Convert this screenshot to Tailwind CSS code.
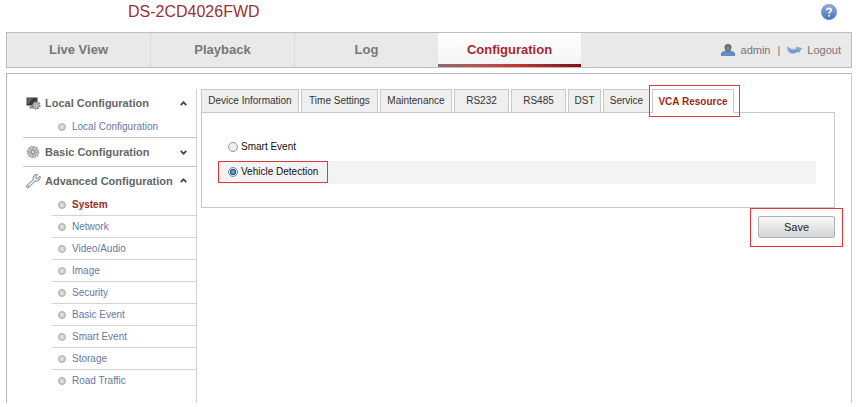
<!DOCTYPE html>
<html lang="en">
<head>
    <meta charset="UTF-8">
    <meta name="viewport" content="width=device-width, initial-scale=1.0">
    <title>DS-2CD4026FWD - Configuration</title>
    <script src="https://cdn.jsdelivr.net/npm/@tailwindcss/browser@4"></script>
</head>
<body class="bg-white font-['Liberation_Sans',Arial,sans-serif] text-[10px] leading-4 text-[#333]">
    <!-- Shared bullet used by the sidebar links -->
    <svg class="hidden">
        <symbol id="bullet" viewBox="0 0 8 8">
            <circle cx="4" cy="4" r="3.5" fill="#c9c9c9" stroke="#b0b0b0" stroke-width="1"/>
            <circle cx="4" cy="4" r="2" fill="#dedede"/>
        </symbol>
    </svg>

    <header class="flex h-8 items-start justify-between pl-32 pr-5">
        <h1 class="text-base leading-6 text-[#983232]">DS-2CD4026FWD</h1>
        <a href="#" aria-label="Help" class="mt-1">
            <svg class="size-4" viewBox="0 0 16 16">
                <defs>
                    <linearGradient id="help" x1="0" y1="0" x2="0" y2="1">
                        <stop offset="0" stop-color="#8fb1e4"/>
                        <stop offset="1" stop-color="#4471bb"/>
                    </linearGradient>
                </defs>
                <circle cx="8" cy="8" r="7.7" fill="url(#help)" stroke="#6d92cc" stroke-width=".6"/>
                <path d="M5.8 6.1C5.9 3.7 10.3 3.7 10.2 6.2C10.1 7.6 8.1 7.7 8.1 9.6" fill="none" stroke="#fff" stroke-width="1.7"/>
                <circle cx="8.1" cy="11.7" r="1" fill="#fff"/>
            </svg>
        </a>
    </header>

    <nav class="ml-[6px] mr-[5px] flex h-9 justify-between border border-[#bdbdbd] bg-[#e9e9e9]">
        <div class="flex w-[574px] text-[13px] font-bold text-[#777]">
            <a href="#" class="flex flex-1 items-center justify-center border-r border-[#dadada]">Live View</a>
            <a href="#" class="flex flex-1 items-center justify-center border-r border-[#dadada]">Playback</a>
            <a href="#" class="flex flex-1 items-center justify-center">Log</a>
            <a href="#" class="relative flex flex-1 items-center justify-center bg-linear-to-b from-white to-[#f3f3f3] text-[#a32a2e]">
                Configuration
                <span class="absolute inset-x-0 bottom-0 h-[3px] bg-linear-to-r from-[#8c6a68] via-[#c9393b] to-[#7e1215]"></span>
            </a>
        </div>
        <div class="flex items-center pr-[10px] text-[11px] text-[#777]">
            <svg class="mr-[6px] h-3 w-[14px]" viewBox="0 0 14 12">
                <path d="M0 11.5V9.5Q1 7.7 5 7H9Q13 7.7 14 9.5V11.5Z" fill="#5d8bd0" stroke="#476fae" stroke-width=".6"/>
                <path d="M3.5 3.5Q3.5 0 7 0T10.5 3.5Q10.3 7 7 8.3Q3.7 7 3.5 3.5Z" fill="#696969"/>
                <ellipse cx="7" cy="4.6" rx="2" ry="2.4" fill="#8b8580"/>
            </svg>
            <span>admin</span>
            <span class="mx-[7px]">|</span>
            <svg class="mr-[5px] h-2 w-[15px]" viewBox="0 0 15 8">
                <path d="M0 .8L3.2 2.8Q5.5 4 9.5 3V1L14.7 2.4L11.7 6.8L10.8 5.6Q8 7.8 4.5 7.3Q1 6.5 0 .8Z" fill="#86a5d4" stroke="#7592c2" stroke-width=".5"/>
                <path d="M3 5.4Q7 6.8 11 4.3" fill="none" stroke="#5f82bb" stroke-width=".9"/>
            </svg>
            <a href="#">Logout</a>
        </div>
    </nav>

    <div class="ml-[6px] mr-[5px] mt-[5px] flex border border-b-0 border-[#b5b5b5] border-r-[#ccc] pl-4 pt-[15px]">
        <aside class="w-[174px] shrink-0 border-r border-[#d0d0d0] pb-3">
            <button class="flex h-7 w-full items-center whitespace-nowrap pl-[3px] pr-[9px] text-left text-[11px] font-bold text-[#666]">
                <svg class="mr-1 h-4 w-[15px] shrink-0" viewBox="0 0 15 16">
                    <rect x=".5" y="2.5" width="11" height="8" rx=".6" fill="#353535" stroke="#a0a0a0"/>
                    <path d="M1.3 3.3H7L2.5 9H1.3Z" fill="#626262"/>
                    <path d="M4 11H8V13.4H3Z" fill="#909090"/>
                    <circle cx="10.3" cy="10.2" r="3.4" fill="#bbb" stroke="#777" stroke-width="1.8" stroke-dasharray="1.7 .9"/>
                    <circle cx="10.3" cy="10.2" r="2.8" fill="#b8b8b8"/>
                    <circle cx="10.3" cy="10.2" r="1.2" fill="#eee" stroke="#777" stroke-width=".6"/>
                </svg>
                Local Configuration
                <svg class="ml-auto h-[5px] w-[7px] shrink-0" viewBox="0 0 7 5"><path d="M.7 4.2L3.5 1.3L6.3 4.2" fill="none" stroke="#444" stroke-width="1.7"/></svg>
            </button>
            <a href="#" class="flex h-[21px] items-center gap-[6px] border-b border-[#c4c4c4] pl-[35px] text-[#6678a8]">
                <svg class="size-2"><use href="#bullet"/></svg>Local Configuration
            </a>

            <button class="flex h-[29px] w-full items-center whitespace-nowrap border-b border-[#c4c4c4] pl-[3px] pr-[9px] text-left text-[11px] font-bold text-[#666]">
                <svg class="mr-1 h-4 w-[15px] shrink-0" viewBox="0 0 15 16">
                    <circle cx="7" cy="8" r="5.4" fill="#bbb" stroke="#999" stroke-width="1.8" stroke-dasharray="1.8 1"/>
                    <circle cx="7" cy="8" r="5.2" fill="#c4c4c4"/>
                    <path d="M7 3V13M2 8H12M3.5 4.5L10.5 11.5M10.5 4.5L3.5 11.5" stroke="#8e8e8e" stroke-width=".8"/>
                    <circle cx="7" cy="8" r="1.7" fill="#ddd" stroke="#888" stroke-width=".7"/>
                </svg>
                Basic Configuration
                <svg class="ml-auto h-[5px] w-[7px] shrink-0" viewBox="0 0 7 5"><path d="M.7 .8L3.5 3.7L6.3 .8" fill="none" stroke="#444" stroke-width="1.7"/></svg>
            </button>

            <button class="flex h-[27px] w-full items-center whitespace-nowrap pl-[3px] pr-[9px] text-left text-[11px] font-bold text-[#666]">
                <svg class="mr-1 h-4 w-[15px] shrink-0" viewBox="0 0 15 16">
                    <path d="M.8 12.4L7.1 6.7Q6.4 3.6 8.7 2Q10 1.2 11.5 1.6L9.7 3.7L10.5 5.3L12.4 5.1L14 3.1Q14.7 5.2 13.1 7Q11.5 8.6 9 8.2L3.1 14.3Q1.7 15.3.7 14.3Q-.1 13.4.8 12.4Z" fill="#e2e7ee" stroke="#7b8797" stroke-width="1"/>
                    <circle cx="2.2" cy="13" r=".7" fill="#7b8797"/>
                </svg>
                Advanced Configuration
                <svg class="ml-auto h-[5px] w-[7px] shrink-0" viewBox="0 0 7 5"><path d="M.7 4.2L3.5 1.3L6.3 4.2" fill="none" stroke="#444" stroke-width="1.7"/></svg>
            </button>
            <ul class="ml-[29px] divide-y divide-[#d4d4d4] text-[#6678a8]">
                <li><a href="#" class="flex h-[21px] items-center gap-[6px] pl-[6px] font-bold text-[#9c2a1c]"><svg class="size-2"><use href="#bullet"/></svg>System</a></li>
                <li><a href="#" class="flex h-[21px] items-center gap-[6px] pl-[6px]"><svg class="size-2"><use href="#bullet"/></svg>Network</a></li>
                <li><a href="#" class="flex h-[21px] items-center gap-[6px] pl-[6px]"><svg class="size-2"><use href="#bullet"/></svg>Video/Audio</a></li>
                <li><a href="#" class="flex h-[21px] items-center gap-[6px] pl-[6px]"><svg class="size-2"><use href="#bullet"/></svg>Image</a></li>
                <li><a href="#" class="flex h-[21px] items-center gap-[6px] pl-[6px]"><svg class="size-2"><use href="#bullet"/></svg>Security</a></li>
                <li><a href="#" class="flex h-[21px] items-center gap-[6px] pl-[6px]"><svg class="size-2"><use href="#bullet"/></svg>Basic Event</a></li>
                <li><a href="#" class="flex h-[21px] items-center gap-[6px] pl-[6px]"><svg class="size-2"><use href="#bullet"/></svg>Smart Event</a></li>
                <li><a href="#" class="flex h-[21px] items-center gap-[6px] pl-[6px]"><svg class="size-2"><use href="#bullet"/></svg>Storage</a></li>
                <li><a href="#" class="flex h-[21px] items-center gap-[6px] pl-[6px]"><svg class="size-2"><use href="#bullet"/></svg>Road Traffic</a></li>
            </ul>
        </aside>

        <main class="ml-1 mr-4 flex-1">
            <div class="flex h-6 gap-[2px] whitespace-nowrap text-[#333]">
                <button class="w-[98px] border border-[#c8c8c8] bg-[#efefef]">Device Information</button>
                <button class="w-[77px] border border-[#c8c8c8] bg-[#efefef]">Time Settings</button>
                <button class="w-[72px] border border-[#c8c8c8] bg-[#efefef]">Maintenance</button>
                <button class="w-[55px] border border-[#c8c8c8] bg-[#efefef]">RS232</button>
                <button class="w-[55px] border border-[#c8c8c8] bg-[#efefef]">RS485</button>
                <button class="w-[33px] border border-[#c8c8c8] bg-[#efefef]">DST</button>
                <button class="w-[47px] border border-[#c8c8c8] bg-[#efefef]">Service</button>
                <button class="relative w-[82px] border border-b-0 border-[#c8c8c8] bg-white font-bold text-[#9c2a1c]">
                    VCA Resource
                    <span class="absolute -bottom-1 -left-1 -right-[7px] -top-[5px] border border-[#e0383e]"></span>
                </button>
            </div>

            <form>
                <div class="-mt-px border border-[#c8c8c8] pb-[23px] pl-4 pr-[18px] pt-5 text-[#111]">
                    <label class="flex h-7 items-center gap-[3px] pl-[10px]">
                        <input type="radio" name="resource" class="size-[10px] appearance-none rounded-full border border-[#999] bg-[#eee]">
                        Smart Event
                    </label>
                    <div class="flex h-[23px] bg-[#f3f3f3]">
                        <label class="flex h-[22px] w-[110px] items-center gap-[3px] border border-[#e0383e] pl-[9px]">
                            <input type="radio" name="resource" checked class="size-[10px] appearance-none rounded-full border border-[#7c8d99] bg-radial from-[#59a9cb] from-20% via-[#1d4f70] via-50% to-[#dce8ee] to-60%">
                            Vehicle Detection
                        </label>
                    </div>
                </div>
                <div class="-mr-2 flex justify-end">
                    <div class="border border-[#e0383e] p-[7px] pb-2">
                        <button type="submit" class="h-[22px] w-[77px] rounded-xs border border-[#a9b4ba] bg-linear-to-b from-[#f8f8f8] to-[#d5d5d5] text-[11px] text-[#222]">Save</button>
                    </div>
                </div>
            </form>
        </main>
    </div>
</body>
</html>
